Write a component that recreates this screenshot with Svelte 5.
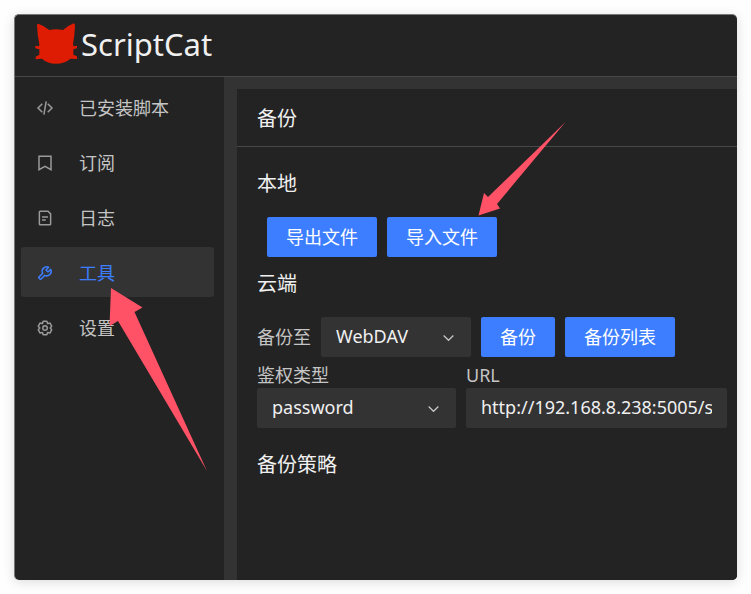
<script>
  const menu = [
    { label: '已安装脚本', icon: ['M16.7 12.7 5.4 24l11.3 11.3', 'M31.3 12.7 42.6 24 31.3 35.3', 'M27.2 6.3 21 41.7'] },
    { label: '订阅', icon: ['M8 6h32v36l-16-9-16 9z'] },
    { label: '日志', icon: ['M16 21h16', 'M16 29h10', 'M37 42H11a2 2 0 0 1-2-2V8a2 2 0 0 1 2-2h21l7 7v27a2 2 0 0 1-2 2Z'] },
    {
      label: '工具',
      active: true,
      icon: [
        'M20 11c3.7-3.7 9.1-4.5 13.5-2.4l.1.2-6.5 6.5a1 1 0 0 0 0 1.4l4.2 4.2a1 1 0 0 0 1.4 0l6.5-6.5.2.1c2 4.4 1.2 9.8-2.5 13.5s-9.2 4.4-13.6 2.3L12.9 40.7a1 1 0 0 1-1.4 0l-4.2-4.2a1 1 0 0 1 0-1.4l10.3-10.4C15.500 20.200 16.300 14.700 20 11Z'
      ]
    },
    {
      label: '设置',
      icon: [
        'M18.800 6.700A1 1 0 0 1 19.800 6h8.400a1 1 0 0 1 1 .7l1.300 4.700a1 1 0 0 0 1.200.7l4.700-1.200a1 1 0 0 1 1.100.4l4.200 7.400a1 1 0 0 1-.1 1.200l-3.400 3.400a1 1 0 0 0 0 1.400l3.400 3.400a1 1 0 0 1 .1 1.200l-4.200 7.400a1 1 0 0 1-1.100.4l-4.700-1.200a1 1 0 0 0-1.200.7l-1.300 4.700a1 1 0 0 1-1 .7h-8.400a1 1 0 0 1-1-.7l-1.300-4.700a1 1 0 0 0-1.200-.7l-4.700 1.200a1 1 0 0 1-1.100-.4l-4.200-7.400a1 1 0 0 1 .1-1.200l3.400-3.400a1 1 0 0 0 0-1.400l-3.400-3.400a1 1 0 0 1-.1-1.200l4.200-7.400a1 1 0 0 1 1.100-.4l4.700 1.200a1 1 0 0 0 1.200-.7Z',
        'M30 24a6 6 0 1 1-12 0 6 6 0 0 1 12 0Z'
      ]
    }
  ];
  let target = $state('WebDAV');
  let auth = $state('password');
  let url = $state('http://192.168.8.238:5005/scriptcat');
</script>

{#snippet chevron()}
  <svg class="chevron" viewBox="0 0 48 48" aria-hidden="true"><path d="M39.600 17.443 24.043 33 8.487 17.443" /></svg>
{/snippet}

<div class="window">
  <header>
    <svg class="logo" viewBox="105 70 126 123" aria-hidden="true">
      <path
        d="M115 72 Q132 78 148 91 Q168 86 189 91 Q204 78 221 71 Q226 72 225 80 Q224 106 219 134 L221 140 L231 138 V146 L220 149 V165 L231 170 V178 L212 177 Q194 192 168 192 Q142 192 126 177 L107 179 V171 L118 165 V149 L106 146 V138 L117 140 L118 134 Q112 106 111 77 Q111 72 115 72 Z"
      />
    </svg>
    <h1>ScriptCat</h1>
  </header>

  <div class="layout">
    <nav>
      {#each menu as item}
        <a href="#{item.label}" class:active={item.active} aria-current={item.active ? 'page' : undefined}>
          <svg viewBox="0 0 48 48" aria-hidden="true">
            {#each item.icon as d}<path {d} />{/each}
          </svg>
          <span>{item.label}</span>
        </a>
      {/each}
    </nav>

    <main>
      <section class="card">
        <h2 class="card-title">备份</h2>
        <div class="card-body">
          <h3>本地</h3>
          <div class="row files">
            <button type="button">导出文件</button>
            <button type="button">导入文件</button>
          </div>
          <h3>云端</h3>
          <div class="row">
            <label for="target">备份至</label>
            <div class="select target">
              <select id="target" bind:value={target}>
                <option>WebDAV</option>
              </select>
              {@render chevron()}
            </div>
            <button type="button">备份</button>
            <button type="button">备份列表</button>
          </div>
          <div class="row params">
            <div class="field auth">
              <label for="auth">鉴权类型</label>
              <div class="select">
                <select id="auth" bind:value={auth}>
                  <option>password</option>
                </select>
                {@render chevron()}
              </div>
            </div>
            <div class="field url">
              <label for="url">URL</label>
              <div class="box"><input id="url" type="text" bind:value={url} /></div>
            </div>
          </div>
          <h3>备份策略</h3>
        </div>
      </section>
    </main>
  </div>

  <svg class="arrows" viewBox="15 15 722 565" width="722" height="565" aria-hidden="true">
    <path d="M111 288 142.500 307.500 134.500 312 207 471 118 321 109.500 326Z" />
    <path d="M478.500 215.500 484 193 488 197 565.500 122 497 204 500 208.500Z" />
  </svg>
</div>

<style>
  :global(body) {
    background: #fefefe;
  }

  .window {
    position: relative;
    box-sizing: border-box;
    display: flex;
    flex-direction: column;
    min-height: calc(100vh - 28px);
    margin: 14px;
    overflow: hidden;
    border: solid #777;
    border-width: 1px 0 0 1px;
    border-radius: 5px;
    background: #232323;
    box-shadow: 0 2px 12px rgba(0, 0, 0, 0.14);
    color: #f0f0f0;
    font-family: 'Noto Sans', 'Noto Sans CJK SC', sans-serif;
    font-size: 18px;
  }

  :global(#app) {
    display: flow-root;
  }

  header {
    box-sizing: border-box;
    display: flex;
    align-items: center;
    gap: 4px;
    height: 62px;
    padding: 0 20px 4px;
    border-bottom: 1px solid #484849;
  }

  .logo {
    width: 42px;
    height: 41px;
    fill: #de1c03;
  }

  h1,
  h2,
  h3 {
    margin: 0;
    font-weight: 400;
  }

  h1 {
    font-size: 31px;
    line-height: 40px;
  }

  .layout {
    display: flex;
    flex: 1;
  }

  nav {
    display: flex;
    flex-direction: column;
    gap: 5px;
    flex: none;
    box-sizing: border-box;
    width: 209px;
    padding: 5px 10px 5px 6px;
  }

  nav a {
    box-sizing: border-box;
    display: flex;
    align-items: center;
    gap: 25px;
    height: 50px;
    padding: 2px 0 0 15px;
    border-radius: 3px;
    color: #c5c5c5;
    line-height: 26px;
    text-decoration: none;
  }

  nav a.active {
    background: #333334;
    color: #3c7eff;
  }

  nav svg {
    width: 18px;
    height: 18px;
    fill: none;
    stroke: #9a9a9a;
    stroke-width: 4;
  }

  nav .active svg {
    stroke: #3c7eff;
  }

  main {
    display: flex;
    flex: 1;
    min-width: 0;
    padding: 12px 0 0 13px;
    background: #333334;
  }

  .card {
    flex: 1;
    min-width: 0;
    background: #232323;
  }

  .card-title {
    padding: 15px 20px 12px;
    border-bottom: 1px solid #484849;
    font-size: 20px;
    line-height: 30px;
  }

  .card-body {
    padding: 22px 10px 20px 20px;
  }

  h3 {
    font-size: 20px;
    line-height: 30px;
  }

  .row {
    display: flex;
    align-items: center;
    gap: 10px;
    margin-top: 18px;
  }

  .files {
    margin-bottom: 12px;
    padding-left: 10px;
  }

  .params {
    margin: 6px 0 22px;
  }

  label {
    color: #c5c5c5;
    line-height: 25px;
  }

  button {
    height: 40px;
    padding: 0 19px 2px;
    border: 0;
    border-radius: 2px;
    background: #3c7eff;
    color: #fff;
    font: inherit;
    cursor: pointer;
  }

  .select {
    position: relative;
  }

  .target {
    width: 150px;
  }

  select,
  .box {
    box-sizing: border-box;
    width: 100%;
    height: 40px;
    padding: 0 15px 2px;
    border: 0;
    border-radius: 2px;
    background: #333334;
  }

  select,
  input {
    display: block;
    appearance: none;
    color: #f0f0f0;
    font: inherit;
  }

  input {
    width: 100%;
    height: 38px;
    padding: 0;
    border: 0;
    background: none;
  }

  .chevron {
    position: absolute;
    top: 13px;
    right: 15px;
    width: 15px;
    height: 15px;
    fill: none;
    stroke: #c5c5c5;
    stroke-width: 4;
    pointer-events: none;
  }

  .field {
    display: flex;
    flex-direction: column;
  }

  .auth {
    width: 199px;
  }

  .url {
    flex: 1;
    min-width: 0;
  }

  .arrows {
    position: absolute;
    top: 0;
    left: 0;
    fill: #ff5266;
    pointer-events: none;
  }
</style>
